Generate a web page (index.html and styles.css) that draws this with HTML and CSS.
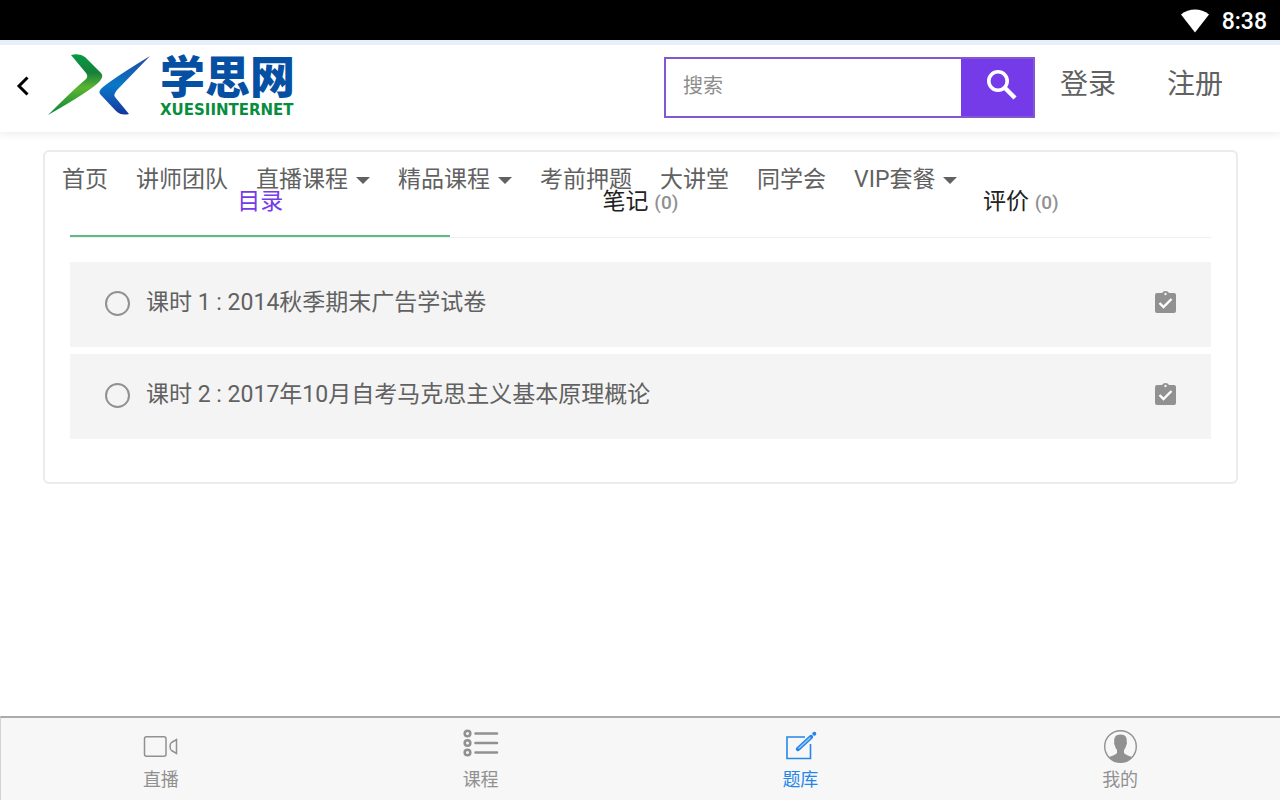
FILE: index.html
```html
<!DOCTYPE html>
<html lang="zh-CN">
<head>
<meta charset="utf-8">
<meta name="viewport" content="width=device-width, initial-scale=1">
<title>学思网</title>
<link rel="stylesheet" href="styles.css">
</head>
<body>
<div class="status-bar">
  <svg width="28" height="24" viewBox="0 0 28 24" aria-hidden="true"><path d="M0 5.5C8-1.2 20-1.2 28 5.5L14 23.5Z" fill="#fff"/></svg>
  <time>8:38</time>
</div>
<header class="header">
  <button class="back" type="button" aria-label="返回">
    <svg width="14" height="20" viewBox="0 0 14 20"><path d="M11.5 1.5L3 10l8.500 8.500" fill="none" stroke="#000" stroke-width="3"/></svg>
  </button>
  <a class="logo" href="#">
    <svg width="104" height="62" viewBox="0 0 104 62" aria-hidden="true">
      <defs>
        <linearGradient id="green" x1="0" y1="0" x2="0" y2="1"><stop offset="0" stop-color="#079b43"/><stop offset=".3" stop-color="#15803a"/><stop offset=".55" stop-color="#5cb531"/><stop offset="1" stop-color="#078538"/></linearGradient>
        <linearGradient id="blue" x1="0" y1="0" x2="0" y2="1"><stop offset="0" stop-color="#24479c"/><stop offset=".5" stop-color="#0879c9"/><stop offset=".75" stop-color="#1159b4"/><stop offset="1" stop-color="#15349a"/></linearGradient>
      </defs>
      <path d="M24 1Q33-1 38 3L54 19Q57 22 53 27Q45 36 1 61Q28 34 38 26Q42 23 39 19Z" fill="url(#green)"/>
      <path d="M103 2L70 36Q66 41 68 43L82 60Q74 62 69 57L53 40Q51 37 56 33Q70 22 103 2Z" fill="url(#blue)"/>
    </svg>
    <span class="brand"><span class="brand-name">学思网</span><span class="brand-latin">XUESIINTERNET</span></span>
  </a>
  <form class="search">
    <input type="text" placeholder="搜索" aria-label="搜索">
    <button type="button" aria-label="提交搜索">
      <svg width="32" height="32" viewBox="0 0 32 32"><circle cx="12" cy="12" r="9.200" fill="none" stroke="#fff" stroke-width="3.600"/><path d="M18.500 18.500L29 29" stroke="#fff" stroke-width="4.400"/></svg>
    </button>
  </form>
  <div class="account"><a href="#">登录</a><a href="#">注册</a></div>
</header>
<main class="main">
  <nav class="site-nav">
    <a href="#">首页</a>
    <a href="#">讲师团队</a>
    <a class="has-menu" href="#">直播课程</a>
    <a class="has-menu" href="#">精品课程</a>
    <a href="#">考前押题</a>
    <a href="#">大讲堂</a>
    <a href="#">同学会</a>
    <a class="has-menu" href="#">VIP套餐</a>
  </nav>
  <section class="card">
    <div class="tabs">
      <a class="tab active" href="#">目录</a>
      <a class="tab" href="#">笔记 <small>(0)</small></a>
      <a class="tab" href="#">评价 <small>(0)</small></a>
    </div>
    <ul class="lessons">
      <li><a class="lesson" href="#">
        <span class="ring"></span>
        <span class="title">课时 1 : 2014秋季期末广告学试卷</span>
        <svg width="21" height="22" viewBox="0 0 21 22" aria-hidden="true"><path d="M2 2H7Q8 0 10.500 0T14 2H19Q21 2 21 4V20Q21 22 19 22H2Q0 22 0 20V4Q0 2 2 2Z" fill="#919191"/><circle cx="10.500" cy="3" r="1.200" fill="#f4f4f4"/><path d="M4.500 12l4 4 8-8" fill="none" stroke="#fff" stroke-width="2.400"/></svg>
      </a></li>
      <li><a class="lesson" href="#">
        <span class="ring"></span>
        <span class="title">课时 2 : 2017年10月自考马克思主义基本原理概论</span>
        <svg width="21" height="22" viewBox="0 0 21 22" aria-hidden="true"><path d="M2 2H7Q8 0 10.500 0T14 2H19Q21 2 21 4V20Q21 22 19 22H2Q0 22 0 20V4Q0 2 2 2Z" fill="#919191"/><circle cx="10.500" cy="3" r="1.200" fill="#f4f4f4"/><path d="M4.500 12l4 4 8-8" fill="none" stroke="#fff" stroke-width="2.400"/></svg>
      </a></li>
    </ul>
  </section>
</main>
<nav class="tab-bar">
  <a href="#">
    <svg width="36" height="36" viewBox="0 0 36 36" fill="none" stroke="currentColor" stroke-width="1.500"><rect x="1.500" y="8.700" width="21.500" height="19.500" rx="2"/><path d="M33.500 11.500V25.500L28.500 22.500Q27 21.500 27 18.500T28.500 14.500Z"/></svg>
    直播
  </a>
  <a href="#">
    <svg width="36" height="36" viewBox="0 0 36 36" fill="none" stroke="currentColor" stroke-width="2.600"><circle cx="4.500" cy="5.500" r="2.800"/><circle cx="4.500" cy="15" r="2.800"/><circle cx="4.500" cy="24.500" r="2.800"/><path d="M12.500 5.500H34M12.500 15H34M12.500 24.500H34" stroke-linecap="round"/></svg>
    课程
  </a>
  <a class="current" href="#">
    <svg width="36" height="36" viewBox="0 0 36 36" fill="none" stroke="currentColor" stroke-width="1.600"><path d="M23 9H5V30.500H28.500V16"/><path d="M16 21L29 9" stroke-width="4.400" stroke-linecap="round"/><path d="M16.500 20.500L28.500 9.500" stroke="#9dceff" stroke-width="1.200"/><circle cx="32.300" cy="5.800" r="2" fill="currentColor" stroke="none"/></svg>
    题库
  </a>
  <a href="#">
    <svg width="36" height="36" viewBox="0 0 36 36" fill="none"><circle cx="18.500" cy="18.500" r="15.800" stroke="currentColor" stroke-width="1.400"/><path d="M18.500 6.500C13.500 6.500 11.800 9.500 12.300 14Q11.500 15 12.800 17.500Q13.500 20.500 15 22V25Q13.500 27 7 29Q11.500 34.300 18.500 34.300T30 29Q23.500 27 22 25V22Q23.500 20.500 24.200 17.500Q25.500 15 24.700 14C25.200 9.500 23.500 6.500 18.500 6.500Z" fill="currentColor"/></svg>
    我的
  </a>
</nav>
</body>
</html>
```

FILE: styles.css
```css
* { box-sizing: border-box; }

body {
  display: flex;
  flex-direction: column;
  min-height: 100vh;
  margin: 0;
  background: #fff;
  color: #616161;
  font-family: Roboto, "Noto Sans CJK SC", sans-serif;
  font-size: 23px;
  line-height: 32px;
}

a { color: inherit; text-decoration: none; }
button { padding: 0; border: 0; background: none; }
svg { display: block; flex: none; }

.status-bar {
  display: flex;
  align-items: center;
  justify-content: flex-end;
  gap: 13px;
  height: 40px;
  padding: 3px 13px 0;
  background: #000;
  color: #fff;
  font-size: 23px;
  font-weight: 500;
}

.status-bar svg { margin-bottom: 2px; }

.header {
  display: flex;
  align-items: center;
  height: 92px;
  padding: 0 57px 3px 16px;
  border-top: 5px solid #e8eefc;
  box-shadow: 0 2px 8px rgba(0, 0, 0, .08);
}

.back { padding-bottom: 3px; }

.logo {
  display: flex;
  align-items: center;
  gap: 9px;
  margin-left: 17px;
  padding-bottom: 4px;
}

.brand {
  display: flex;
  flex-direction: column;
  gap: 3px;
  padding-top: 3px;
}

.brand-name {
  color: #0650a3;
  font-family: "Noto Sans CJK SC", sans-serif;
  font-size: 45px;
  font-weight: 900;
  line-height: 44px;
}

.brand-latin {
  color: #078d3d;
  font-family: "DejaVu Sans", sans-serif;
  font-size: 15px;
  font-weight: 700;
  line-height: 20px;
}

.search {
  display: flex;
  width: 371px;
  height: 61px;
  margin-left: auto;
  border: 2px solid #8357d0;
}

.search input {
  flex: 1;
  min-width: 0;
  padding: 0 17px 3px;
  border: 0;
  outline: 0;
  color: #616161;
  font: inherit;
  font-size: 20px;
}

.search input::placeholder { color: #8c8c8c; opacity: 1; }

.search button {
  display: flex;
  align-items: center;
  justify-content: center;
  width: 72px;
  padding: 0 0 4px 10px;
  background: #763be9;
}

.account {
  display: flex;
  gap: 51px;
  margin-left: 25px;
  padding-bottom: 5px;
  font-size: 28px;
}

.main {
  position: relative;
  padding: 18px 42px 32px 43px;
}

.site-nav {
  position: absolute;
  top: 32px;
  left: 62px;
  display: flex;
  gap: 28px;
  white-space: nowrap;
}

.has-menu { display: flex; align-items: center; gap: 8px; }

.has-menu::after {
  content: "";
  border: 7px solid transparent;
  border-top-color: #616161;
  border-bottom: 0;
}

.card {
  padding: 34px 25px 43px;
  border: 2px solid #ebebee;
  border-radius: 6px;
}

.tabs {
  display: grid;
  grid-template-columns: repeat(3, 1fr);
  border-bottom: 1px solid #f0f0f0;
  color: #222;
  text-align: center;
}

.tab { height: 51px; border-bottom: 2px solid transparent; }
.tab.active { color: #763be9; border-color: #5fb981; }
.tab small { color: #919191; font-size: 19px; font-weight: 500; }

.lessons {
  display: grid;
  gap: 7px;
  margin: 24px 0 0;
  padding: 0;
  list-style: none;
}

.lesson {
  display: flex;
  align-items: center;
  height: 85px;
  padding: 0 35px 4px;
  background: #f4f4f4;
}

.lesson svg { margin-bottom: 2px; }

.ring {
  width: 25px;
  height: 25px;
  margin-top: 2px;
  border: 2px solid #919191;
  border-radius: 50%;
}

.title { flex: 1; margin-left: 16px; }

.tab-bar {
  display: grid;
  grid-template-columns: repeat(4, 1fr);
  margin-top: auto;
  border-top: 2px solid #ababab;
  border-left: 1px solid #d2d2d2;
  background: #f7f7f7;
  color: #919191;
  font-size: 18px;
  line-height: 26px;
}

.tab-bar a {
  display: flex;
  flex-direction: column;
  align-items: center;
  gap: 3px;
  padding: 10px 0 7px;
}

.tab-bar .current { color: #2586e8; }
```
